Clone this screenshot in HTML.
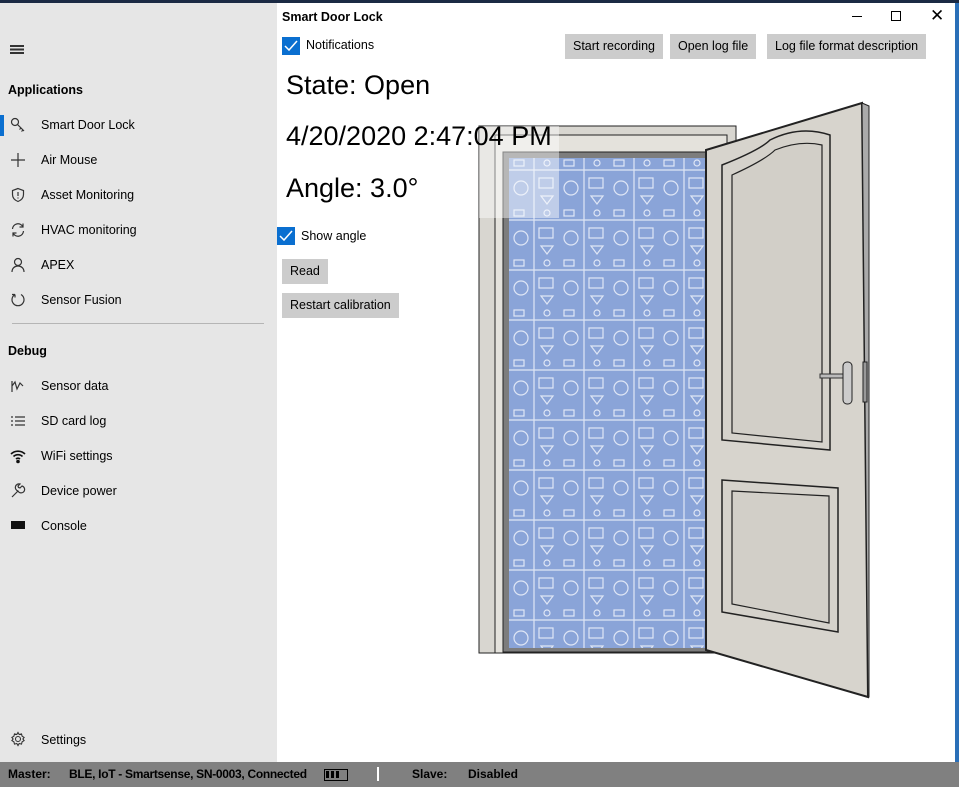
<!DOCTYPE html>
<html><head><style>
*{margin:0;padding:0;box-sizing:border-box}
body{width:959px;height:787px;overflow:hidden;background:#fff;font-family:"Liberation Sans",sans-serif;position:relative;color:#000}
.side{position:absolute;left:0;top:3px;width:277px;height:759px;background:#e6e6e6}
.t{position:absolute;font-size:12.5px;white-space:nowrap}
.h{position:absolute;font-size:12.5px;font-weight:bold}
.ic{position:absolute;left:10px;width:16px;height:16px}
.btn{position:absolute;background:#cccccc;font-size:12.5px;padding:0 8px;height:25px;line-height:25px}
.cb{position:absolute;width:18px;height:18px;background:#0a6fd0}
.big{position:absolute;left:286px;font-size:27px}
</style></head><body>
<div style="position:absolute;left:0;top:0;width:959px;height:3px;background:#1b2a44"></div>
<div style="position:absolute;right:0;top:3px;width:4px;height:759px;background:#2a6fb8"></div>
<div class="side">
<div style="position:absolute;left:10px;top:42px;width:14px;height:1.5px;background:#333;box-shadow:0 3.5px 0 #333,0 7px 0 #333"></div>
<div class="h" style="left:8px;top:80px">Applications</div>
<div style="position:absolute;left:0;top:112px;width:4px;height:21px;background:#0a6fd0"></div>
<svg class="ic" style="top:114px" viewBox="0 0 16 16" fill="none" stroke="#333" stroke-width="1.2"><circle cx="5" cy="5" r="3.5"/><path d="M7.5 7.5L14 14M11 11l-1.5 1.5M13 13l-1.5 1.5"/></svg>
<div class="t" style="left:41px;top:115px">Smart Door Lock</div>
<svg class="ic" style="top:149px" viewBox="0 0 16 16" stroke="#333" stroke-width="1.2"><path d="M8 1v14M1 8h14"/></svg>
<div class="t" style="left:41px;top:150px">Air Mouse</div>
<svg class="ic" style="top:184px" viewBox="0 0 16 16" fill="none" stroke="#333" stroke-width="1.2"><path d="M8 1.5L2.5 3.5v4c0 4 3 6 5.5 7 2.5-1 5.5-3 5.5-7v-4z M8 5v4M8 10.5v1"/></svg>
<div class="t" style="left:41px;top:185px">Asset Monitoring</div>
<svg class="ic" style="top:219px" viewBox="0 0 16 16" fill="none" stroke="#333" stroke-width="1.2"><path d="M2.5 7A5.5 5.5 0 0 1 13 5M13.5 9A5.5 5.5 0 0 1 3 11M13 1.5V5H9.5M3 14.5V11h3.5"/></svg>
<div class="t" style="left:41px;top:220px">HVAC monitoring</div>
<svg class="ic" style="top:254px" viewBox="0 0 16 16" fill="none" stroke="#333" stroke-width="1.2"><circle cx="8" cy="5" r="3.5"/><path d="M2 15c0-4 3-6 6-6s6 2 6 6"/></svg>
<div class="t" style="left:41px;top:255px">APEX</div>
<svg class="ic" style="top:289px" viewBox="0 0 16 16" fill="none" stroke="#333" stroke-width="1.2"><path d="M5 2.5A6 6 0 1 0 11 2.5M5 2.5V5.5M5 2.5H2"/></svg>
<div class="t" style="left:41px;top:290px">Sensor Fusion</div>
<div style="position:absolute;left:12px;top:320px;width:252px;height:1px;background:#b5b5b5"></div>
<div class="h" style="left:8px;top:341px">Debug</div>
<svg class="ic" style="top:375px" viewBox="0 0 16 16" fill="none" stroke="#333" stroke-width="1.2"><path d="M2 3v11M2 8l3-4 2 7 3-6 3 3"/></svg>
<div class="t" style="left:41px;top:376px">Sensor data</div>
<svg class="ic" style="top:410px" viewBox="0 0 16 16" stroke="#333" stroke-width="1.2"><path d="M1 4h2M5 4h10M1 8h2M5 8h10M1 12h2M5 12h10"/></svg>
<div class="t" style="left:41px;top:411px">SD card log</div>
<svg class="ic" style="top:445px" viewBox="0 0 16 16" fill="none" stroke="#111" stroke-width="1.6"><path d="M1 6a10 10 0 0 1 14 0M3.5 8.5a6.5 6.5 0 0 1 9 0M6 11a3 3 0 0 1 4 0"/><circle cx="8" cy="13.5" r="1" fill="#111"/></svg>
<div class="t" style="left:41px;top:446px">WiFi settings</div>
<svg class="ic" style="top:480px" viewBox="0 0 16 16" fill="none" stroke="#333" stroke-width="1.2"><path d="M2 14l6-6M8 8a3.5 3.5 0 1 0 4-5l-2 2-1.5-.5L8 3l2-2a3.5 3.5 0 0 0-2 7z"/></svg>
<div class="t" style="left:41px;top:481px">Device power</div>
<div style="position:absolute;left:11px;top:518px;width:14px;height:8px;background:#111"></div>
<div class="t" style="left:41px;top:516px">Console</div>
<svg class="ic" style="top:728px" viewBox="0 0 16 16" fill="none" stroke="#333" stroke-width="1.1"><circle cx="8" cy="8" r="2.5"/><path d="M8 1.5l1.2 2 2.3-.6.6 2.3 2 1.2-1.2 1.6 1.2 1.6-2 1.2-.6 2.3-2.3-.6L8 14.5l-1.2-2-2.3.6-.6-2.3-2-1.2L3.1 8 1.9 6.4l2-1.2.6-2.3 2.3.6z"/></svg>
<div class="t" style="left:41px;top:730px">Settings</div>
</div>
<div class="h" style="left:282px;top:10px">Smart Door Lock</div>
<div style="position:absolute;left:852px;top:16px;width:10px;height:1px;background:#000"></div>
<div style="position:absolute;left:891px;top:11px;width:10px;height:10px;border:1px solid #000"></div>
<div style="position:absolute;left:930px;top:6px;font-size:17px;line-height:20px">✕</div>
<div class="cb" style="left:282px;top:37px"><svg width="18" height="18"><path d="M3 9l4 4 8-9" stroke="#fff" stroke-width="1.5" fill="none"/></svg></div>
<div class="t" style="left:306px;top:38px">Notifications</div>
<div class="btn" style="left:565px;top:34px">Start recording</div>
<div class="btn" style="left:670px;top:34px">Open log file</div>
<div class="btn" style="left:767px;top:34px">Log file format description</div>
<svg style="position:absolute;left:0;top:0" width="959" height="787">
<defs><pattern id="p" x="509" y="158" width="50" height="50" patternUnits="userSpaceOnUse">
<g stroke="#eef2fb" stroke-width="1.2" fill="none" opacity="0.85">
<path d="M0 12h50M25 0v50"/>
<circle cx="12" cy="30" r="7"/><rect x="30" y="20" width="14" height="10"/><rect x="5" y="2" width="10" height="6"/><path d="M32 38l6 8 6-8z"/><circle cx="38" cy="5" r="3"/>
</g></pattern></defs>
<rect x="479" y="126" width="257" height="527" fill="#d8d6d0" stroke="#222"/>
<rect x="495" y="135" width="232" height="518" fill="#e4e2dc" stroke="#222"/>
<rect x="503" y="152" width="207" height="500" fill="#7d7d7d" stroke="#222"/>
<rect x="509" y="158" width="196" height="490" fill="#8aa4d8"/>
<rect x="509" y="158" width="196" height="490" fill="url(#p)"/>
<rect x="479" y="126" width="80" height="92" fill="#fff" opacity="0.45"/>
<path d="M706 150L862 103L868 697L706 650Z" fill="#d7d4cd" stroke="#222" stroke-width="2"/>
<path d="M862 103L869 106L869 697L868 697Z" fill="#aaa" stroke="#222"/>
<path d="M722 165Q760 150 770 140Q800 125 830 135L830 450L722 440Z" fill="#d5d2cb" stroke="#222" stroke-width="1.5"/>
<path d="M732 175Q765 160 775 150Q800 140 822 145L822 442L732 433Z" fill="#d2cfc8" stroke="#222" stroke-width="1.2"/>
<path d="M722 480L838 488L838 632L722 612Z" fill="#d5d2cb" stroke="#222" stroke-width="1.5"/>
<path d="M732 491L829 496L829 623L732 604Z" fill="#d2cfc8" stroke="#222" stroke-width="1.2"/>
<rect x="820" y="374" width="26" height="4" fill="#bbb" stroke="#333"/>
<rect x="843" y="362" width="9" height="42" rx="4" fill="#ccc" stroke="#222"/>
<rect x="863" y="362" width="4" height="40" fill="#999" stroke="#222"/>
</svg>
<div class="big" style="top:70px">State: Open</div>
<div class="big" style="top:121px">4/20/2020 2:47:04 PM</div>
<div class="big" style="top:173px">Angle: 3.0°</div>
<div class="cb" style="left:277px;top:227px"><svg width="18" height="18"><path d="M3 9l4 4 8-9" stroke="#fff" stroke-width="1.5" fill="none"/></svg></div>
<div class="t" style="left:301px;top:229px">Show angle</div>
<div class="btn" style="left:282px;top:259px">Read</div>
<div class="btn" style="left:282px;top:293px">Restart calibration</div>
<div style="position:absolute;left:0;top:762px;width:959px;height:25px;background:#808080;font-size:12px;font-weight:bold;color:#000">
<span style="position:absolute;left:8px;top:5px">Master:</span>
<span style="position:absolute;left:69px;top:5px;letter-spacing:-0.3px">BLE, IoT - Smartsense, SN-0003, Connected</span>
<span style="position:absolute;left:324px;top:7px;width:24px;height:12px;border:1.5px solid #000;padding:1px"><span style="display:block;width:14px;height:7px;background:repeating-linear-gradient(90deg,#000 0 3px,transparent 3px 5px)"></span></span>
<span style="position:absolute;left:377px;top:5px;width:2px;height:14px;background:#fff"></span>
<span style="position:absolute;left:412px;top:5px">Slave:</span>
<span style="position:absolute;left:468px;top:5px">Disabled</span>
</div>
</body></html>
